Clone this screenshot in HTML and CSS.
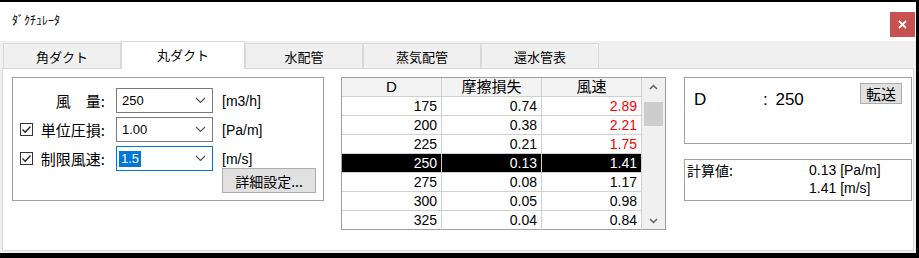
FILE: index.html
```html
<!DOCTYPE html>
<html lang="ja">
<head>
	<meta charset="UTF-8">
	<title>ダクチュレータ</title>
	<link rel="stylesheet" href="styles.css">
</head>
<body>
	<div class="window">
		<!-- タイトルバー -->
		<div class="titlebar">
			<span class="title">ﾀﾞｸﾁｭﾚｰﾀ</span>
			<span class="close">
				<svg width="9" height="9" viewBox="0 0 9 9"><path d="M1 1L8 8M8 1L1 8" stroke="#fff" stroke-width="1.8"/></svg>
			</span>
		</div>

		<!-- タブ -->
		<div class="tabs">
			<div class="tab">角ダクト</div>
			<div class="tab active">丸ダクト</div>
			<div class="tab">水配管</div>
			<div class="tab">蒸気配管</div>
			<div class="tab">還水管表</div>
		</div>

		<div class="pane">
			<!-- 入力 -->
			<div class="group">
				<div class="row">
					<span class="lbl">風　量:</span>
					<div class="combo"><span>250</span><svg width="11" height="7" viewBox="0 0 11 7"><path d="M1 1L5.5 5.5L10 1" fill="none" stroke="#555" stroke-width="1.2"/></svg></div>
					<span class="unit">[m3/h]</span>
				</div>
				<div class="row">
					<span class="lbl"><span class="chk"><svg width="13" height="13" viewBox="0 0 13 13"><rect x="0.5" y="0.5" width="12" height="12" fill="#fff" stroke="#333"/><path d="M2.5 6.5L5.2 9.2L10.5 3.5" fill="none" stroke="#222" stroke-width="1.3"/></svg></span>単位圧損:</span>
					<div class="combo"><span>1.00</span><svg width="11" height="7" viewBox="0 0 11 7"><path d="M1 1L5.5 5.5L10 1" fill="none" stroke="#555" stroke-width="1.2"/></svg></div>
					<span class="unit">[Pa/m]</span>
				</div>
				<div class="row last">
					<span class="lbl"><span class="chk"><svg width="13" height="13" viewBox="0 0 13 13"><rect x="0.5" y="0.5" width="12" height="12" fill="#fff" stroke="#333"/><path d="M2.5 6.5L5.2 9.2L10.5 3.5" fill="none" stroke="#222" stroke-width="1.3"/></svg></span>制限風速:</span>
					<div class="combo focus"><span class="sel">1.5</span><svg width="11" height="7" viewBox="0 0 11 7"><path d="M1 1L5.5 5.5L10 1" fill="none" stroke="#555" stroke-width="1.2"/></svg></div>
					<span class="unit">[m/s]</span>
				</div>
				<div class="btnrow">
					<span class="btn wide">詳細設定...</span>
				</div>
			</div>

			<!-- 一覧 -->
			<div class="grid">
				<div class="cells">
					<div class="gr head"><div>D</div><div>摩擦損失</div><div>風速</div></div>
					<div class="gr"><div>175</div><div>0.74</div><div class="red">2.89</div></div>
					<div class="gr"><div>200</div><div>0.38</div><div class="red">2.21</div></div>
					<div class="gr"><div>225</div><div>0.21</div><div class="red">1.75</div></div>
					<div class="gr cur"><div>250</div><div>0.13</div><div>1.41</div></div>
					<div class="gr"><div>275</div><div>0.08</div><div>1.17</div></div>
					<div class="gr"><div>300</div><div>0.05</div><div>0.98</div></div>
					<div class="gr"><div>325</div><div>0.04</div><div>0.84</div></div>
				</div>
				<div class="vscroll">
					<span class="arrow"><svg width="9" height="6" viewBox="0 0 9 6"><path d="M1 5L4.5 1.5L8 5" fill="none" stroke="#606060" stroke-width="1.5"/></svg></span>
					<span class="thumb"></span>
					<span class="space"></span>
					<span class="arrow"><svg width="9" height="6" viewBox="0 0 9 6"><path d="M1 1L4.5 4.5L8 1" fill="none" stroke="#606060" stroke-width="1.5"/></svg></span>
				</div>
			</div>

			<!-- 結果 -->
			<div class="side">
				<div class="result">
					<span class="rname">D</span>
					<span class="rval">: 250</span>
					<span class="btn send">転送</span>
				</div>
				<div class="calc">
					<span class="clbl">計算値:</span>
					<div class="cvals">
						<div>0.13 [Pa/m]</div>
						<div>1.41 [m/s]</div>
					</div>
				</div>
			</div>
		</div>
	</div>
</body>
</html>
```

FILE: styles.css
```css
/* 初期化 */
body{margin:0;padding:0;background:#000;width:919px;height:258px;overflow:hidden;font-family:"Liberation Sans","Noto Sans CJK JP",sans-serif;color:#000;}
*{box-sizing:border-box;}

/* ウィンドウ */
.window{
	width: 916px;
	height: 251px;
	margin-top: 2px;
	background: #f0f0f0;
	display: flex;
	flex-direction: column;
}

.titlebar{
	height: 39px;
	background: #fff;
	display: flex;
	justify-content: space-between;
	align-items: flex-start;
}

.titlebar .title{
	padding: 10px 0 0 12px;
	font-size: 12px;
	line-height: 16px;
	font-family: "Noto Sans CJK JP",sans-serif;
}

.titlebar .close{
	width: 25px;
	height: 25px;
	margin: 10px 1px 0 0;
	background: #c75050;
	display: flex;
	align-items: center;
	justify-content: center;
}

/* タブ */
.tabs{
	height: 28px;
	margin-bottom: -1px;
	padding-left: 3px;
	display: flex;
	align-items: flex-end;
}

.tab{
	width: 118px;
	height: 25px;
	margin-bottom: 1px;
	border: 1px solid #d9d9d9;
	border-bottom: none;
	background: #f0f0f0;
	font-size: 13px;
	font-family: "Noto Sans CJK JP",sans-serif;
	display: flex;
	align-items: center;
	justify-content: center;
}

.tab.active{
	width: 124px;
	height: 28px;
	margin-bottom: 0;
	padding-bottom: 3px;
	background: #fff;
	position: relative;
	z-index: 1;
}

.pane{
	flex: 1;
	margin: 0 2px 2px 2px;
	padding: 8px 0 0 9px;
	border: 1px solid #d9d9d9;
	background: #fff;
	display: flex;
	align-items: flex-start;
}

/* 入力グループ */
.group{
	width: 312px;
	height: 124px;
	padding-top: 10px;
	border: 1px solid #a0a0a0;
}

.group .row{
	height: 25px;
	margin-bottom: 4px;
	display: flex;
	align-items: center;
}

.group .row.last{
	margin-bottom: 0;
}

.group .lbl{
	width: 92px;
	padding-left: 7px;
	font-size: 15px;
	font-family: "Noto Sans CJK JP",sans-serif;
	white-space: nowrap;
	display: flex;
	justify-content: flex-end;
	align-items: center;
}

.group .chk{
	margin-right: auto;
	height: 13px;
	display: flex;
}

.group .combo{
	width: 97px;
	height: 25px;
	margin-left: 11px;
	padding: 0 6px 0 5px;
	border: 1px solid #7a7a7a;
	font-size: 13px;
	display: flex;
	align-items: center;
	justify-content: space-between;
}

.group .combo.focus{
	border-color: #0078d7;
	padding-left: 2px;
}

.group .combo .sel{
	padding: 0 2px;
	background: #0078d7;
	color: #fff;
	line-height: 16px;
}

.group .unit{
	margin-left: 9px;
	font-size: 14px;
}

.group .btnrow{
	margin-top: -3px;
	padding-left: 209px;
}

.btn{
	border: 1px solid #adadad;
	background: #e1e1e1;
	font-family: "Noto Sans CJK JP",sans-serif;
	display: flex;
	align-items: center;
	justify-content: center;
}

.btn.wide{
	width: 94px;
	height: 25px;
	font-size: 14px;
}

/* 一覧 */
.grid{
	width: 325px;
	height: 153px;
	margin-left: 17px;
	border: 1px solid #a0a0a0;
	display: flex;
}

.grid .cells{
	width: 300px;
}

.grid .gr{
	height: 19px;
	display: grid;
	grid-template-columns: 100px 100px 100px;
}

.grid .gr div{
	padding-right: 4px;
	border-right: 1px solid #d0d0d0;
	border-bottom: 1px solid #d0d0d0;
	font-size: 14px;
	line-height: 18px;
	text-align: right;
}

.grid .gr:last-child div{
	border-bottom: none;
}

.grid .head div{
	padding: 0;
	background: #f3f3f3;
	font-size: 15px;
	text-align: center;
	font-family: "Liberation Sans","Noto Sans CJK JP",sans-serif;
}

.grid .gr .red{
	color: #ff0000;
}

.grid .cur div{
	background: #000;
	color: #fff;
}

.grid .vscroll{
	width: 23px;
	background: #f0f0f0;
	display: flex;
	flex-direction: column;
}

.vscroll .arrow{
	height: 17px;
	display: flex;
	align-items: center;
	justify-content: center;
}

.vscroll .thumb{
	height: 24px;
	margin: 7px 2px 0 2px;
	background: #cdcdcd;
}

.vscroll .space{
	flex: 1;
}

/* 結果 */
.side{
	width: 228px;
	margin-left: 18px;
}

.side .result{
	height: 67px;
	padding: 5px 9px 0 9px;
	border: 1px solid #a0a0a0;
	display: flex;
	align-items: flex-start;
}

.result .rname,
.result .rval{
	margin-top: 7px;
	font-size: 17px;
	line-height: 20px;
}

.result .rname{
	width: 69px;
}

.result .rval{
	flex: 1;
	word-spacing: 3px;
}

.btn.send{
	width: 42px;
	height: 21px;
	font-size: 15px;
}

.side .calc{
	height: 42px;
	margin-top: 15px;
	padding: 1px 0 0 2px;
	border: 1px solid #a0a0a0;
	display: flex;
}

.calc .clbl{
	width: 122px;
	font-size: 14px;
	line-height: 18px;
	font-family: "Noto Sans CJK JP",sans-serif;
}

.calc .cvals{
	font-size: 14px;
	line-height: 18px;
}
```
